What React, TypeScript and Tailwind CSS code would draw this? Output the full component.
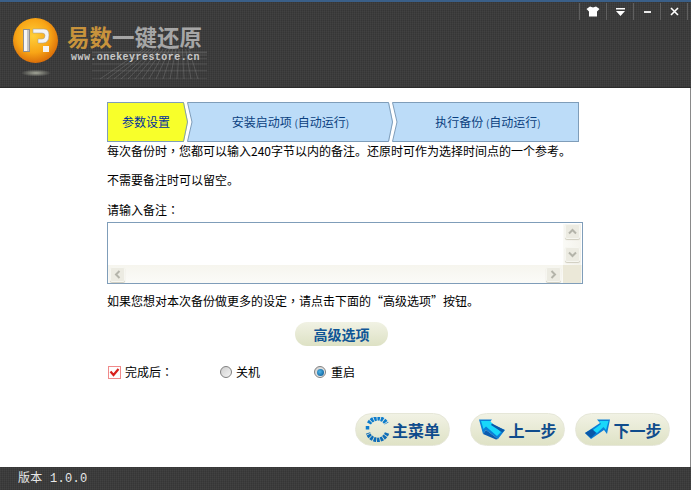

const cjk = "font-['Liberation_Mono','Noto_Sans_CJK_SC',monospace]";
const noto = "font-['Noto_Sans_CJK_SC',sans-serif]";
const tc = "font-['Noto_Sans_CJK_TC',sans-serif]";
const COMMA = "\uFF0C";
const COLON = "\uFF1A";

function Sep({ l, r, lb }: { l: string; r: string; lb: string }) {
  return (
    <svg width="10" height="40" viewBox="0 0 10 40" className="shrink-0">
      <polygon points="0,0.5 0.5,0.5 4.5,20 0.5,39.5 0,39.5" fill={l} stroke={l} />
      <path d="M0 0.5H0.5L4.5 20L0.5 39.5H0" fill="none" stroke={lb} />
      <polygon points="4.5,0.5 10,0.5 10,39.5 4.5,39.5 9,20" fill={r} />
      <path d="M10 0.5H4.5L9 20L4.5 39.5H10" fill="none" stroke={lb} />
    </svg>
  );
}

function Logo() {
  return (
    <svg width="48" height="66" viewBox="0 0 48 66" className="shrink-0">
      <defs>
        <radialGradient id="orb" cx="45%" cy="40%" r="62%">
          <stop offset="0" stopColor="#ffcf3a" />
          <stop offset="0.6" stopColor="#f8a516" />
          <stop offset="1" stopColor="#d86a08" />
        </radialGradient>
        <radialGradient id="shadow" cx="50%" cy="50%" r="50%">
          <stop offset="0" stopColor="#a5a89a" />
          <stop offset="1" stopColor="#a5a89a" stopOpacity="0" />
        </radialGradient>
      </defs>
      <circle cx="23.5" cy="22.5" r="22.5" fill="url(#orb)" />
      <path d="M11 11H18V34H11Z" fill="#8f8f8f" />
      <path d="M12 12H15V33H12Z" fill="#f6f6f6" />
      <path d="M15 12H17V33H15Z" fill="#c4c4c4" />
      <path d="M21 11H32Q37 11 37 17Q37 25 31 25H26V21H30Q33 21 33 17.5Q33 15 30 15H21Z" fill="#f4f4f4" stroke="#999" strokeWidth="0.5" />
      <path d="M31 28H37V34H31Z" fill="#f4f4f4" />
      <ellipse cx="24" cy="55" rx="15" ry="3.5" fill="url(#shadow)" />
    </svg>
  );
}

function Controls() {
  const sep = <div className="w-px h-[17px] bg-[#5f5f5f]" />;
  return (
    <div className="absolute top-[1px] left-[579px] flex items-start">
      {sep}
      <div className="w-[26px] h-[17px] flex items-center justify-center pr-[1px]">
        <svg width="14" height="11" viewBox="0 0 14 11"><path d="M4 0.5L7 1.5L10 0.5L13.5 3L11 5.5V10.5H3V5.5L0.5 3Z" fill="#fff" /></svg>
      </div>
      {sep}
      <div className="w-[26px] h-[17px] flex items-center justify-center">
        <svg width="9" height="8" viewBox="0 0 9 8"><path d="M0 0H9V1.5H0ZM0 3H9L4.5 8Z" fill="#fff" /></svg>
      </div>
      {sep}
      <div className="w-[26px] h-[17px] flex items-center justify-center">
        <div className="w-[7px] h-[2px] bg-[#e8e8e8]" />
      </div>
      {sep}
      <div className="w-[26px] h-[17px] flex items-center justify-center">
        <svg width="9" height="9" viewBox="0 0 9 9"><path d="M1 1L8 8M8 1L1 8" stroke="#fff" strokeWidth="1.6" /></svg>
      </div>
      {sep}
    </div>
  );
}

function Grid() {
  const lines = [];
  for (let i = 0; i < 15; i++) {
    const x = 8 + i * 7;
    lines.push(<line key={"a" + i} x1={52 + i * 3.2} y1="0" x2={x} y2="30" stroke="#8a8a8a" strokeOpacity="0.35" />);
  }
  for (let i = 0; i < 7; i++) {
    const y = 3 + i * i * 0.75;
    lines.push(<line key={"b" + i} x1={0} y1={y} x2="115" y2={y} stroke="#8a8a8a" strokeOpacity="0.3" />);
  }
  return (
    <svg width="115" height="30" viewBox="0 0 115 30" className="absolute left-[92px] top-[47px]">
      {lines}
    </svg>
  );
}

function Bump({ d }: { d: string }) {
  return (
    <div className="w-[15px] h-[15px] rounded-[2px] bg-[#ecebe2] border border-[#f6f6f0] shadow-[0_1px_1px_#cfcdbe] flex items-center justify-center shrink-0">
      <svg width="9" height="9" viewBox="0 0 9 9"><path d={d} fill="none" stroke="#b4b4aa" strokeWidth="2" /></svg>
    </div>
  );
}

function PillButton({ icon, label }: { icon: React.ReactNode; label: string }) {
  return (
    <div className="w-[95px] h-[33px] rounded-full bg-gradient-to-b from-[#f1f2e4] to-[#dfe2c6] border border-[#e6e7d8] flex items-center justify-center gap-[2px] shrink-0">
      {icon}
      <span className={`text-[16px] leading-none font-bold text-[#0f4c8c] ${noto}`}>{label}</span>
    </div>
  );
}

function Ring() {
  return (
    <svg width="25" height="25" viewBox="0 0 25 25">
      <path d="M4 6.5A10 10 0 0 1 21.5 6.5" fill="none" stroke="#0d7ccc" strokeWidth="4.5" strokeDasharray="2.6 0.8" />
      <path d="M22 16A10 10 0 0 1 3 16" fill="none" stroke="#0d6cb8" strokeWidth="4.5" strokeDasharray="2.6 0.8" />
      <path d="M2.5 9V12.5" stroke="#0d7ccc" strokeWidth="3.5" />
    </svg>
  );
}

function ArrowLeft() {
  return (
    <svg width="28" height="23" viewBox="0 0 28 23">
      <path d="M1 1.5H14L11 5L27 12L20 21L8 12L5 16Z" fill="#0a80d8" />
      <path d="M3 3H12L23 14L19 18L8 8.5L5.5 11Z" fill="#18d8fa" />
      <path d="M14 5.5L26.5 12L24.5 14.5L13 7Z" fill="#0a58a8" />
      <path d="M5 16L8 12L20 21L18 21.5Z" fill="#0a5cb0" />
    </svg>
  );
}

function ArrowRight() {
  return (
    <svg width="28" height="23" viewBox="0 0 28 23">
      <path d="M27 1.5H14L17 5L2 15L8 21L21 12L24 16Z" fill="#0a80d8" />
      <path d="M25.5 3H16L18 6L10 12L14 15L20.5 9L23 12Z" fill="#18d8fa" />
      <path d="M2 15L9 11L13 15L8 20Z" fill="#0a58a8" />
    </svg>
  );
}

function Radio({ on }: { on?: boolean }) {
  return (
    <span className="w-[12px] h-[12px] rounded-full border border-[#808080] bg-gradient-to-br from-[#cfcfcf] to-[#f4f4f4] flex items-center justify-center shrink-0">
      {on && <span className="w-[7px] h-[7px] rounded-full bg-[radial-gradient(circle_at_40%_40%,#4cb4e8,#04508c)]" />}
    </span>
  );
}

function Paren({ c }: { c: string }) {
  return <span className="text-[10px]">{c}</span>;
}

export default function App() {
  const tex =
    "bg-[repeating-linear-gradient(90deg,rgba(255,255,255,0.035)_0,rgba(255,255,255,0.035)_1px,transparent_1px,transparent_2px),repeating-linear-gradient(0deg,rgba(0,0,0,0.09)_0,rgba(0,0,0,0.09)_1px,transparent_1px,transparent_2px)]";
  return (
    <div className={`w-[691px] h-[490px] overflow-hidden flex flex-col bg-white text-[12px] leading-[16px] text-black ${cjk}`}>
      <header className="relative h-[88px] shrink-0 bg-[#3b3b3b] border-t-2 border-[#3a5f88] border-b border-b-[#2c2c2c]">
        <div className={`absolute inset-0 ${tex}`} />
        <Grid />
        <div className="relative flex items-start pl-[12px] pt-[16px] gap-[7px]">
          <Logo />
          <div className="flex flex-col pt-[4px]">
            <div className={`text-[22.5px] leading-[28px] font-bold ${noto} whitespace-nowrap`}>
              <span className="text-[#c8933c]">易数</span>
              <span className="text-[#a6a6a6]">一键还原</span>
            </div>
            <div className="ml-[4px] mt-[2px] text-[10px] leading-[12px] font-bold tracking-[0.45px] text-[#c8c8c8] font-['Liberation_Mono',monospace] whitespace-nowrap">
              www.onekeyrestore.cn
            </div>
          </div>
        </div>
        <Controls />
      </header>

      <main className="flex-1 min-h-0 relative border-r border-r-[#8a8a8a] pl-[107px] pt-[14px]">
        <div className="flex w-[472px] h-[40px]">
          <div className="w-[76px] shrink-0 bg-[#f8ff2a] border-y border-l border-[#7f9db9] flex items-center justify-center pl-[1px] text-[#002f9c]">
            <span className={`whitespace-nowrap ${noto}`}>参数设置</span>
          </div>
          <Sep l="#f8ff2a" r="#bcdcf8" lb="#7f9db9" />
          <div className="w-[195px] shrink-0 bg-[#bcdcf8] border-y border-[#7f9db9] flex items-center justify-center text-[#0a3f80]">
            <span className={`whitespace-nowrap ${noto}`}>安装启动项 <Paren c="(" />自动运行<Paren c=")" /></span>
          </div>
          <Sep l="#bcdcf8" r="#bcdcf8" lb="#7f9db9" />
          <div className="flex-1 bg-[#bcdcf8] border-y border-r border-[#7f9db9] flex items-center justify-center text-[#0a3f80]">
            <span className={`whitespace-nowrap ${noto}`}>执行备份 <Paren c="(" />自动运行<Paren c=")" /></span>
          </div>
        </div>

        <p className={`mt-[1px] whitespace-nowrap ${noto}`}>每次备份时<span className={tc}>{COMMA}</span>您都可以输入240字节以内的备注。还原时可作为选择时间点的一个参考。</p>
        <p className={`mt-[13px] whitespace-nowrap ${noto}`}>不需要备注时可以留空。</p>
        <p className={`mt-[14px] whitespace-nowrap ${noto}`}>请输入备注<span className={tc}>{COLON}</span></p>

        <div className="mt-[4px] w-[476px] h-[62px] border border-[#7f9db9] bg-white flex flex-col">
          <div className="flex-1 min-h-0 flex justify-end pt-[1px] pr-[1px]">
            <div className="w-[18px] flex flex-col items-center gap-[8px] bg-gradient-to-r from-[#fafaf6] to-[#f4f3ec]">
              <Bump d="M1 6.5L4.5 3L8 6.5" />
              <Bump d="M1 2.5L4.5 6L8 2.5" />
            </div>
          </div>
          <div className="h-[18px] flex items-center bg-gradient-to-b from-[#f6f5ee] to-[#fbfbf8]">
            <div className="pl-[2px] flex-1 flex items-center justify-between pr-[2px]">
              <Bump d="M6.5 1L3 4.5L6.5 8" />
              <Bump d="M2.5 1L6 4.5L2.5 8" />
            </div>
            <div className="w-[18px] h-[18px] bg-[#ebe8d8] mr-[1px]" />
          </div>
        </div>

        <p className={`mt-[9px] whitespace-nowrap ${noto}`}>如果您想对本次备份做更多的设定<span className={tc}>{COMMA}</span>请点击下面的“高级选项”按钮。</p>

        <div className="ml-[188px] mt-[13px] w-[93px] h-[24px] rounded-full bg-gradient-to-b from-[#f1f2e4] to-[#dde1c4] flex items-center justify-center">
          <span className={`text-[14px] leading-none font-bold text-[#0f5596] ${noto}`}>高级选项</span>
        </div>

        <div className={`mt-[18px] flex items-center h-[16px] ${noto}`}>
          <span className="ml-[1px] w-[13px] h-[13px] border border-[#f08a8a] bg-[#fdfdfd] flex items-center justify-center shrink-0">
            <svg width="11" height="10" viewBox="0 0 11 10"><path d="M1.5 4.5L4.5 8L9.5 2" fill="none" stroke="#d8201c" strokeWidth="2.2" /></svg>
          </span>
          <span className="ml-[4px] w-[47px] whitespace-nowrap">完成后<span className={tc}>{COLON}</span></span>
          <span className="ml-[48px]"><Radio /></span>
          <span className="ml-[4px] w-[24px] whitespace-nowrap">关机</span>
          <span className="ml-[54px]"><Radio on /></span>
          <span className="ml-[5px] whitespace-nowrap">重启</span>
        </div>

        <div className="absolute left-[355px] top-[325px] flex">
          <PillButton icon={<Ring />} label="主菜单" />
          <div className="w-[20px]" />
          <PillButton icon={<ArrowLeft />} label="上一步" />
          <div className="w-[10px]" />
          <PillButton icon={<ArrowRight />} label="下一步" />
        </div>
      </main>

      <footer className="relative h-[23px] shrink-0 bg-[#3b3b3b] flex items-center pl-[18px] text-[#e8e8e8]">
        <div className={`absolute inset-0 ${tex}`} />
        <span className="relative whitespace-nowrap tracking-[0.3px]">版本 1.0.0</span>
      </footer>
    </div>
  );
}
